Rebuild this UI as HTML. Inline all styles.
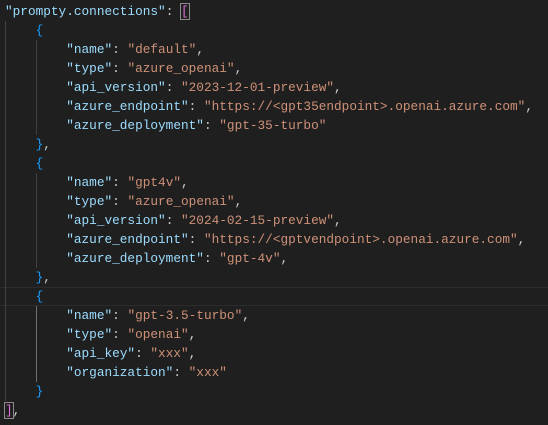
<!DOCTYPE html>
<html><head><style>
html,body{margin:0;padding:0;background:#1f1f1f;width:548px;height:425px;overflow:hidden}
pre{margin:0;position:absolute;left:5px;top:2px;font-family:"Liberation Mono",monospace;font-size:12.75px;line-height:19px;color:#cccccc;white-space:pre}
.k{color:#9cdcfe}.s{color:#ce9178}.b{color:#179fff}.p{color:#da70d6}
.box{outline:1px solid #8a8a8a;outline-offset:0}
.g{position:absolute;width:1px;background:#404040}
.cl{position:absolute;left:0;width:548px;top:287px;height:17px;border-top:1px solid #2c2c2c;border-bottom:1px solid #2c2c2c}
</style></head><body>
<div class="cl"></div>
<div class="g" style="left:5px;top:21px;height:380px"></div>
<div class="g" style="left:36px;top:40px;height:95px"></div>
<div class="g" style="left:36px;top:173px;height:95px"></div>
<div class="g" style="left:36px;top:306px;height:76px;background:#707070"></div>
<pre><span class="k">"prompty.connections"</span>: <span class="p box">[</span>
    <span class="b">{</span>
        <span class="k">"name"</span>: <span class="s">"default"</span>,
        <span class="k">"type"</span>: <span class="s">"azure_openai"</span>,
        <span class="k">"api_version"</span>: <span class="s">"2023-12-01-preview"</span>,
        <span class="k">"azure_endpoint"</span>: <span class="s">"https://&lt;gpt35endpoint&gt;.openai.azure.com"</span>,
        <span class="k">"azure_deployment"</span>: <span class="s">"gpt-35-turbo"</span>
    <span class="b">}</span>,
    <span class="b">{</span>
        <span class="k">"name"</span>: <span class="s">"gpt4v"</span>,
        <span class="k">"type"</span>: <span class="s">"azure_openai"</span>,
        <span class="k">"api_version"</span>: <span class="s">"2024-02-15-preview"</span>,
        <span class="k">"azure_endpoint"</span>: <span class="s">"https://&lt;gptvendpoint&gt;.openai.azure.com"</span>,
        <span class="k">"azure_deployment"</span>: <span class="s">"gpt-4v"</span>,
    <span class="b">}</span>,
    <span class="b">{</span>
        <span class="k">"name"</span>: <span class="s">"gpt-3.5-turbo"</span>,
        <span class="k">"type"</span>: <span class="s">"openai"</span>,
        <span class="k">"api_key"</span>: <span class="s">"xxx"</span>,
        <span class="k">"organization"</span>: <span class="s">"xxx"</span>
    <span class="b">}</span>
<span class="p box">]</span>,</pre>
</body></html>
